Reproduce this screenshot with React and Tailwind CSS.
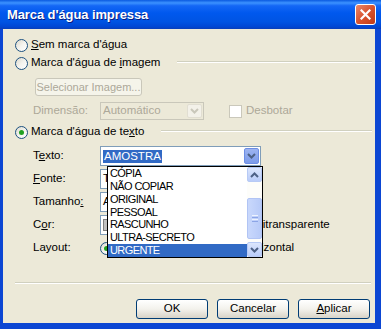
import React from "react";

const chevron = (color) => (
  <svg width="9" height="6" viewBox="0 0 9 6">
    <path d="M1 1 L4.5 4.5 L8 1" fill="none" stroke={color} strokeWidth="2" />
  </svg>
);

const chevronUp = (color) => (
  <svg width="9" height="6" viewBox="0 0 9 6">
    <path d="M1 5 L4.5 1.5 L8 5" fill="none" stroke={color} strokeWidth="2" />
  </svg>
);

function Radio({ checked }) {
  return (
    <span className="w-[13px] h-[13px] shrink-0 rounded-full border border-[#1C5180] bg-gradient-to-br from-[#DCD9CC] via-[#F4F3EE] to-white flex items-center justify-center">
      {checked && <span className="w-[5px] h-[5px] rounded-full bg-[#21A121]" />}
    </span>
  );
}

function Check({ disabled }) {
  return (
    <span
      className={
        disabled
          ? "block w-[13px] h-[13px] shrink-0 border border-[#CAC8BB] bg-white"
          : "block w-[13px] h-[13px] shrink-0 border border-[#1C5180] bg-gradient-to-br from-[#DCD9CC] to-white"
      }
    />
  );
}

function Combo({ w, disabled, children, active }) {
  return (
    <div
      className={
        "h-full flex items-center border " +
        (disabled ? "border-[#C9C7BA] bg-[#ECE9D8]" : "border-[#7F9DB9] bg-white")
      }
      style={{ width: w }}
    >
      <div className="flex-1 flex items-center pl-[2px] overflow-hidden whitespace-nowrap">{children}</div>
      {disabled ? (
        <div className="w-[15px] h-[calc(100%-2px)] mr-px rounded-[2px] border border-[#E1DED2] bg-[#F3F1E9] flex items-center justify-center">
          {chevron("#C9C7BA")}
        </div>
      ) : (
        <div
          className={
            "w-[15px] h-[calc(100%-2px)] mr-px rounded-[2px] border flex items-center justify-center " +
            (active ? "border-[#6D8EE4] bg-gradient-to-b from-[#9DB4F0] to-[#7C9BEA]" : "border-[#B9CCF7] bg-gradient-to-b from-[#D6E0FA] to-[#B1C5F6]")
          }
        >
          {chevron("#4D6185")}
        </div>
      )}
    </div>
  );
}

function Label({ children }) {
  return <span className="w-[67px] shrink-0">{children}</span>;
}

const items = ["CÓPIA", "NÃO COPIAR", "ORIGINAL", "PESSOAL", "RASCUNHO", "ULTRA-SECRETO", "URGENTE"];

function DropList() {
  return (
    <div className="absolute left-[7px] top-[20px] z-10 w-[156px] h-[92px] border border-black bg-white flex text-[11px]">
      <div className="flex-1 flex flex-col">
        {items.map((t) => (
          <div
            key={t}
            className={
              "h-[13px] flex items-center pl-[2px] tracking-[-0.6px] leading-none " +
              (t === "URGENTE" ? "bg-[#316AC5] text-white" : "text-black")
            }
          >
            {t}
          </div>
        ))}
      </div>
      <div className="w-[15px] flex flex-col bg-[#FDFDFA]">
        <div className="h-[15px] rounded-[2px] border border-[#B7CAF5] bg-gradient-to-b from-[#DCE6FC] to-[#B9CCF9] flex items-center justify-center">
          {chevronUp("#4D6185")}
        </div>
        <div className="mt-[16px] h-[41px] rounded-[2px] border border-[#B1C4F4] bg-gradient-to-r from-[#C9D8FC] to-[#B7CAF8] flex flex-col items-center justify-center gap-px">
          <span className="w-[6px] h-px bg-[#EEF3FE]" />
          <span className="w-[6px] h-px bg-[#8CA5E6]" />
          <span className="w-[6px] h-px bg-[#EEF3FE]" />
          <span className="w-[6px] h-px bg-[#8CA5E6]" />
        </div>
        <div className="flex-1" />
        <div className="h-[15px] rounded-[2px] border border-[#B7CAF5] bg-gradient-to-b from-[#DCE6FC] to-[#B9CCF9] flex items-center justify-center">
          {chevron("#4D6185")}
        </div>
      </div>
    </div>
  );
}

function Button({ children }) {
  return (
    <button className="w-[72px] h-[20px] rounded-[3px] border border-[#003C74] bg-gradient-to-b from-white via-[#F3F2EC] to-[#D8D3C7] text-black text-[11.5px] leading-none">
      {children}
    </button>
  );
}

function Sep() {
  return <div className="h-[2px] border-t border-[#D0D0BF] border-b border-b-white" />;
}

export default function App() {
  return (
    <div className="w-[381px] h-[329px] flex flex-col font-['Liberation_Sans',Arial,sans-serif] text-[11.5px] text-black select-none">
      <div className="h-[29px] shrink-0 flex items-center justify-between pl-[7px] pr-[5px] bg-[linear-gradient(to_bottom,#0A5AE0_0%,#3C92FF_10%,#1467F5_20%,#0058EE_45%,#0054E3_75%,#0047D4_92%,#0A3FB8_100%)]">
        <span className="text-white font-bold text-[13px] tracking-[-0.1px] [text-shadow:1px_1px_0_#0A1E82]">
          Marca d'água impressa
        </span>
        <div className="w-[21px] h-[21px] rounded-[3px] border border-white bg-gradient-to-br from-[#E9876A] via-[#D9532E] to-[#C03A14] flex items-center justify-center">
          <svg width="11" height="11" viewBox="0 0 11 11">
            <path d="M1.5 1.5 L9.5 9.5 M9.5 1.5 L1.5 9.5" stroke="white" strokeWidth="2.2" strokeLinecap="square" />
          </svg>
        </div>
      </div>

      <div className="flex-1 flex flex-col bg-[#ECE9D8] border-l-[3px] border-r-[6px] border-b-[6px] border-[#0B46D3] pt-[7px]">
        <div className="h-[18px] flex items-center pl-[12px] gap-[3px]">
          <Radio />
          <span>
            <u>S</u>em marca d'água
          </span>
        </div>
        <div className="h-[18px] flex items-center pl-[12px] pr-[3px] gap-[3px]">
          <Radio />
          <span>
            Marca d'água de <u>i</u>magem
          </span>
          <div className="flex-1 ml-[14px] -mt-[2px]">
            <Sep />
          </div>
        </div>
        <div className="mt-[6px] h-[18px] pl-[32px] flex">
          <div className="w-[107px] h-full rounded-[3px] border border-[#C9C7BA] bg-[#F5F4EA] text-[#ACA899] text-[11px] whitespace-nowrap flex items-center justify-center">
            Selecionar Imagem...
          </div>
        </div>
        <div className="mt-[6px] h-[18px] pl-[30px] flex items-center text-[#ACA899]">
          <Label>Dimensão:</Label>
          <Combo w={104} disabled>
            <span className="text-[#ACA899]">Automático</span>
          </Combo>
          <span className="ml-[25px]">
            <Check disabled />
          </span>
          <span className="ml-[4px]">Desbotar</span>
        </div>
        <div className="mt-[3px] h-[18px] flex items-center pl-[12px] pr-[3px] gap-[3px]">
          <Radio checked />
          <span>
            Marca d'água de te<u>x</u>to
          </span>
          <div className="flex-1 ml-[14px] -mt-[3px]">
            <Sep />
          </div>
        </div>

        <div className="mt-[5px] flex flex-col gap-[3px] pl-[30px]">
          <div className="h-[20px] flex items-center">
            <Label>
              T<u>e</u>xto:
            </Label>
            <div className="relative h-full">
              <Combo w={161} active>
                <span className="bg-[#316AC5] text-white px-px leading-[13px]">AMOSTRA</span>
              </Combo>
              <DropList />
            </div>
          </div>
          <div className="h-[20px] flex items-center">
            <Label>
              <u>F</u>onte:
            </Label>
            <Combo w={161}>Times New Roman</Combo>
          </div>
          <div className="h-[20px] flex items-center">
            <Label>
              Tamanho<u>:</u>
            </Label>
            <Combo w={104}>Automático</Combo>
          </div>
          <div className="h-[20px] flex items-center">
            <Label>
              C<u>o</u>r:
            </Label>
            <Combo w={104}>
              <span className="w-[70px] h-[12px] bg-[#C0C0C0] border border-[#808080]" />
            </Combo>
            <span className="ml-[18px]">
              <Check />
            </span>
            <span className="ml-[4px]">Semitransparente</span>
          </div>
          <div className="h-[20px] flex items-center">
            <Label>Layout:</Label>
            <Radio checked />
            <span className="ml-[3px]">Diagonal</span>
            <span className="ml-[65px]">
              <Radio />
            </span>
            <span className="ml-[3px]">Horizontal</span>
          </div>
        </div>

        <div className="mt-[24px] pl-[12px] pr-[4px]">
          <Sep />
        </div>

        <div className="mt-[15px] flex justify-end gap-[9px] pr-[5px]">
          <Button>OK</Button>
          <Button>Cancelar</Button>
          <Button>
            <u>A</u>plicar
          </Button>
        </div>
      </div>
    </div>
  );
}
